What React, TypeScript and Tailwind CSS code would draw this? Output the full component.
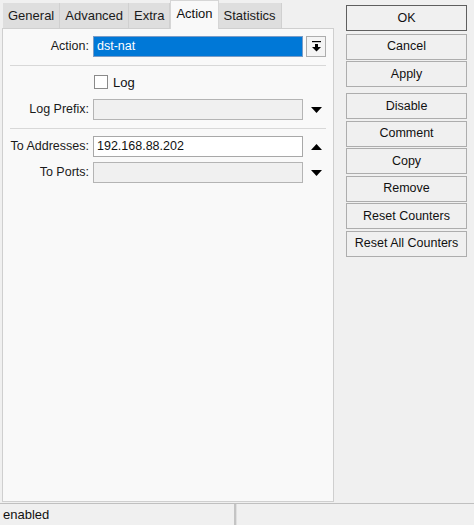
import React from "react";

const font = { fontFamily: '"Liberation Sans", Arial, sans-serif' };

const TABS = ["General", "Advanced", "Extra", "Action", "Statistics"];
const BUTTONS = [
  "OK",
  "Cancel",
  "Apply",
  "Disable",
  "Comment",
  "Copy",
  "Remove",
  "Reset Counters",
  "Reset All Counters",
];

function TriDown() {
  return (
    <svg width="11" height="6" viewBox="0 0 11 6">
      <polygon points="0,0 11,0 5.5,6" fill="#000" />
    </svg>
  );
}

function TriUp() {
  return (
    <svg width="11" height="6" viewBox="0 0 11 6">
      <polygon points="0,6 11,6 5.5,0" fill="#000" />
    </svg>
  );
}

function Row({
  label,
  children,
  className = "",
}: {
  label: string;
  children: React.ReactNode;
  className?: string;
}) {
  return (
    <div className={`flex items-center ${className}`}>
      <div className="w-[88px] pr-[2px] text-right text-[12.5px] text-[#1a1a1a]">{label}</div>
      <div className="ml-[2px] flex items-center">{children}</div>
    </div>
  );
}

function Field({ value, disabled }: { value?: string; disabled?: boolean }) {
  return (
    <div
      className={`flex h-[21px] w-[210px] items-center border px-[3px] text-[12.5px] text-[#111] ${
        disabled ? "border-[#b4b4b4] bg-[#f0f0f0]" : "border-[#a8a8a8] bg-white"
      }`}
    >
      {value}
    </div>
  );
}

function Arrow({ up }: { up?: boolean }) {
  return (
    <div className="ml-[3px] flex h-[21px] w-[20px] items-center justify-center">
      {up ? <TriUp /> : <TriDown />}
    </div>
  );
}

export default function App() {
  return (
    <div className="flex h-[525px] w-[474px] flex-col bg-[#f0f0f0]" style={font}>
      <div className="flex flex-1">
        {/* left side: tabs + panel */}
        <div className="flex w-[334px] flex-col pl-[2px]">
          <div className="flex h-[28px] items-end pl-[1px]">
            {TABS.map((t) =>
              t === "Action" ? (
                <div
                  key={t}
                  className="relative z-10 -mb-px flex h-[29px] items-center border-x border-t border-[#d6d6d6] bg-[#f9f9f9] px-[5px] pb-[3px] text-[13px] text-[#111]"
                >
                  {t}
                </div>
              ) : (
                <div
                  key={t}
                  className="flex h-[25px] items-center border-r border-[#d0d0d0] bg-[#dedede] px-[5px] text-[13px] text-[#1a1a1a]"
                >
                  {t}
                </div>
              )
            )}
          </div>
          <div className="flex h-[474px] flex-col border border-[#cfcfcf] bg-[#f9f9f9]">
            <Row label="Action:" className="mt-[7px]">
              <div className="flex h-[21px] w-[210px] items-center border border-[#7a9cc6] bg-[#0078d7] px-[3px] text-[12.5px] text-white">
                dst-nat
              </div>
              <div className="ml-[3px] flex h-[21px] w-[20px] items-center justify-center border border-[#adadad] bg-[#f4f4f4]">
                <svg width="9" height="11" viewBox="0 0 9 11">
                  <rect x="0" y="0" width="9" height="1.2" fill="#000" />
                  <rect x="3" y="3" width="3" height="3" fill="#000" />
                  <polygon points="0,6 9,6 4.5,10.5" fill="#000" />
                </svg>
              </div>
            </Row>
            <div className="mx-[7px] mt-[8px] h-px bg-[#d8d8d8]" />
            <div className="mt-[9px] flex h-[14px] items-center pl-[91px]">
              <div className="h-[14px] w-[14px] border border-[#8a8a8a] bg-white" />
              <span className="ml-[5px] text-[13px] leading-none text-[#111]">Log</span>
            </div>
            <Row label="Log Prefix:" className="mt-[10px]">
              <Field disabled />
              <Arrow />
            </Row>
            <div className="mx-[7px] mt-[8px] h-px bg-[#d8d8d8]" />
            <Row label="To Addresses:" className="mt-[7px]">
              <Field value="192.168.88.202" />
              <Arrow up />
            </Row>
            <Row label="To Ports:" className="mt-[5px]">
              <Field disabled />
              <Arrow />
            </Row>
          </div>
        </div>

        {/* right side: buttons */}
        <div className="ml-[12px] mt-[5px] flex w-[121px] flex-col">
          {BUTTONS.map((b, i) => (
            <div
              key={b}
              className={`flex h-[26px] items-center justify-center border bg-[#f0f0f0] text-[12.5px] text-[#111] ${
                i === 0 ? "border-[#5f5f5f]" : "border-[#adadad]"
              } ${i === 0 ? "mb-[1px]" : i === 3 ? "mt-[6px]" : "mt-[1.5px]"}`}
            >
              {b}
            </div>
          ))}
        </div>
      </div>

      {/* status bar */}
      <div className="flex h-[22px] border-t border-[#c0c0c0]">
        <div className="flex w-[236px] items-center border-r-2 border-[#c4c4c4] pl-[3px] text-[13px] text-[#111]">
          enabled
        </div>
        <div className="flex-1 border-l border-[#e0e0e0]" />
      </div>
    </div>
  );
}
